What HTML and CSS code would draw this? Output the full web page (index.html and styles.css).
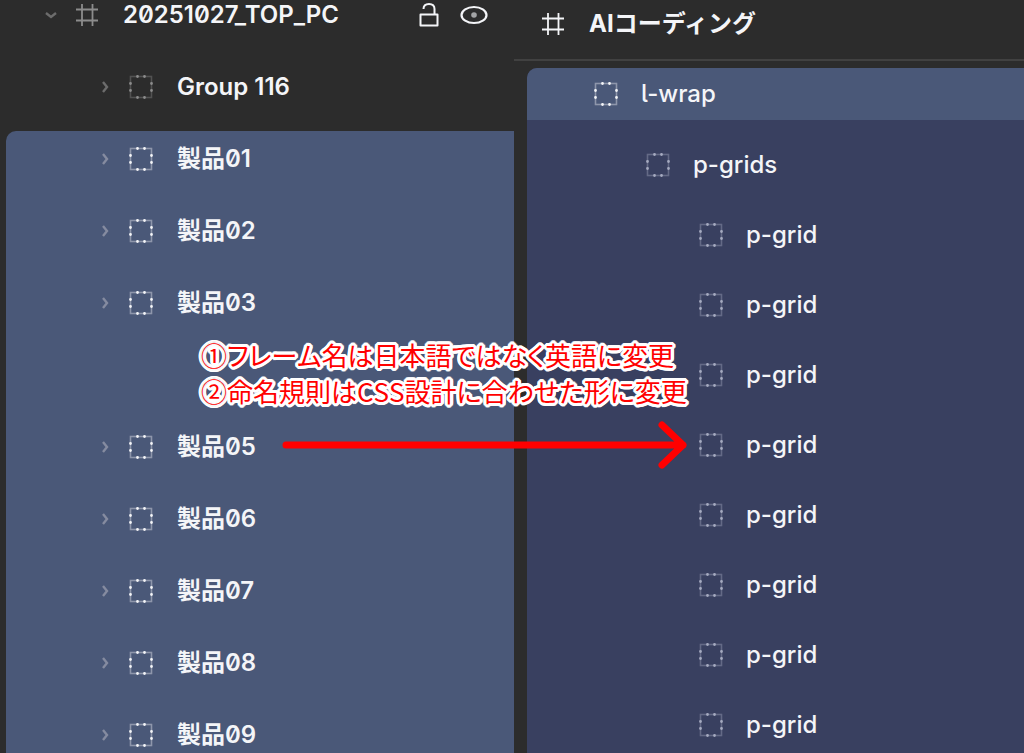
FILE: index.html
```html
<!DOCTYPE html>
<html lang="ja">
<head>
<meta charset="utf-8">
<meta name="viewport" content="width=device-width, initial-scale=1">
<title>20251027_TOP_PC</title>
<link rel="stylesheet" href="styles.css">
</head>
<body>
<svg class="symbols" aria-hidden="true">
  <symbol id="group" viewBox="0 0 24 24">
    <rect x="1.500" y="1.500" width="21" height="21" fill="none" stroke="currentColor" stroke-width="1.600" opacity=".4"/>
    <path d="M8.500 1.500h.01M15.500 1.500h.01M8.500 22.500h.01M15.500 22.500h.01M1.500 8.500v.01M1.500 15.500v.01M22.500 8.500v.01M22.500 15.500v.01" stroke="currentColor" stroke-width="2.800" stroke-linecap="round"/>
  </symbol>
  <symbol id="frame" viewBox="0 0 24 24">
    <path d="M7 1v22M17.500 1v22M1 6.500h22M1 17.500h22" fill="none" stroke="currentColor" stroke-width="1.800"/>
  </symbol>
  <symbol id="chevron" viewBox="0 0 12 16">
    <path d="M4 3l4 5-4 5" fill="none" stroke="currentColor" stroke-width="2.400"/>
  </symbol>
</svg>
<main class="board">
  <section class="pane pane-source">
    <header class="row row-top">
      <button class="toggle toggle-open" aria-label="折りたたむ"><svg><use href="#chevron"/></svg></button>
      <svg class="icon dim"><use href="#frame"/></svg>
      <span class="name">20251027_TOP_PC</span>
      <span class="tools">
        <button class="tool" aria-label="ロック"><svg viewBox="0 0 28 28"><path d="M5.500 13.500h17v11h-17zM8.500 8q0-5 5.500-5t5.500 5v5.500" fill="none" stroke="currentColor" stroke-width="2" stroke-linejoin="round"/></svg></button>
        <button class="tool" aria-label="表示"><svg viewBox="0 0 28 28"><ellipse cx="14" cy="14" rx="12.500" ry="8" fill="none" stroke="currentColor" stroke-width="2.200"/><circle cx="14" cy="14" r="2.800" fill="currentColor" opacity=".6"/></svg></button>
      </span>
    </header>
    <div class="row row-child">
      <button class="toggle" aria-label="開く"><svg><use href="#chevron"/></svg></button>
      <svg class="icon dim"><use href="#group"/></svg>
      <span class="name">Group 116</span>
    </div>
    <ul class="selection">
      <li class="row row-child"><button class="toggle" aria-label="開く"><svg><use href="#chevron"/></svg></button><svg class="icon"><use href="#group"/></svg><span class="name">製品01</span></li>
      <li class="row row-child"><button class="toggle" aria-label="開く"><svg><use href="#chevron"/></svg></button><svg class="icon"><use href="#group"/></svg><span class="name">製品02</span></li>
      <li class="row row-child"><button class="toggle" aria-label="開く"><svg><use href="#chevron"/></svg></button><svg class="icon"><use href="#group"/></svg><span class="name">製品03</span></li>
      <li class="row row-child row-after-gap"><button class="toggle" aria-label="開く"><svg><use href="#chevron"/></svg></button><svg class="icon"><use href="#group"/></svg><span class="name">製品05</span></li>
      <li class="row row-child"><button class="toggle" aria-label="開く"><svg><use href="#chevron"/></svg></button><svg class="icon"><use href="#group"/></svg><span class="name">製品06</span></li>
      <li class="row row-child"><button class="toggle" aria-label="開く"><svg><use href="#chevron"/></svg></button><svg class="icon"><use href="#group"/></svg><span class="name">製品07</span></li>
      <li class="row row-child"><button class="toggle" aria-label="開く"><svg><use href="#chevron"/></svg></button><svg class="icon"><use href="#group"/></svg><span class="name">製品08</span></li>
      <li class="row row-child"><button class="toggle" aria-label="開く"><svg><use href="#chevron"/></svg></button><svg class="icon"><use href="#group"/></svg><span class="name">製品09</span></li>
    </ul>
  </section>
  <section class="pane">
    <header class="head">
      <svg class="icon"><use href="#frame"/></svg>
      <span class="name heading">AIコーディング</span>
    </header>
    <div class="tree">
      <div class="node node-root"><svg class="icon"><use href="#group"/></svg><span class="name">l-wrap</span></div>
      <ul class="branch">
        <li class="node level-1"><svg class="icon soft"><use href="#group"/></svg><span class="name">p-grids</span></li>
        <li class="node level-2"><svg class="icon soft"><use href="#group"/></svg><span class="name">p-grid</span></li>
        <li class="node level-2"><svg class="icon soft"><use href="#group"/></svg><span class="name">p-grid</span></li>
        <li class="node level-2"><svg class="icon soft"><use href="#group"/></svg><span class="name">p-grid</span></li>
        <li class="node level-2"><svg class="icon soft"><use href="#group"/></svg><span class="name">p-grid</span></li>
        <li class="node level-2"><svg class="icon soft"><use href="#group"/></svg><span class="name">p-grid</span></li>
        <li class="node level-2"><svg class="icon soft"><use href="#group"/></svg><span class="name">p-grid</span></li>
        <li class="node level-2"><svg class="icon soft"><use href="#group"/></svg><span class="name">p-grid</span></li>
        <li class="node level-2"><svg class="icon soft"><use href="#group"/></svg><span class="name">p-grid</span></li>
      </ul>
    </div>
  </section>
  <p class="note">①フレーム名は日本語ではなく英語に変更<br>②命名規則はCSS設計に合わせた形に変更</p>
  <svg class="arrow" viewBox="0 0 410 50" aria-hidden="true"><path d="M6 25h397M382 5l21 20-21 20" fill="none" stroke="currentColor" stroke-width="7" stroke-linecap="round" stroke-linejoin="round"/></svg>
</main>
</body>
</html>
```
FILE: styles.css
```css
* { box-sizing: border-box; }

body {
  margin: 0;
  background: #2c2c2c;
  color: #f4f5f8;
  font-family: Inter, "Noto Sans CJK JP", sans-serif;
  font-size: 24px;
  font-weight: 500;
  line-height: 30px;
  font-feature-settings: "zero", "cv05";
}

ul { margin: 0; padding: 0; list-style: none; }

.symbols { position: absolute; width: 0; height: 0; }

.board {
  position: relative;
  display: grid;
  grid-template-columns: 257fr 255fr;
  height: 100vh;
  overflow: hidden;
}

.pane { display: flex; flex-direction: column; min-width: 0; }
.pane-source { font-weight: 600; }

.row { display: flex; align-items: center; height: 56px; }
.row-top { height: 30px; margin-bottom: 29px; padding: 0 26px 0 44px; }
.row-child { padding-left: 98px; }

.icon { width: 24px; height: 24px; flex: none; margin-right: 24px; }
.dim { color: #8c8c8c; }
.soft { color: #a6abc0; }
.name { white-space: nowrap; }

.toggle, .tool {
  display: flex;
  padding: 0;
  border: 0;
  background: none;
  color: inherit;
}
.toggle { margin-right: 17px; color: #858ba0; }
.toggle svg { width: 14px; height: 16px; }
.row-top .toggle, .pane > .row-child .toggle { color: #6c6c6c; }
.toggle-open svg { transform: rotate(90deg); }

.tools { display: flex; gap: 17px; margin-left: auto; }
.tool svg { width: 28px; height: 28px; }

.selection {
  flex: 1;
  display: flex;
  flex-direction: column;
  gap: 16px;
  margin: 16px 0 0 6px;
  border-radius: 10px 0 0 0;
  background: #4a5878;
}
.selection .row { flex: none; }
.selection .row-child { padding-left: 92px; }
.selection .row-after-gap { margin-top: 72px; }

.head {
  display: flex;
  align-items: center;
  height: 61px;
  padding: 0 0 11px 27px;
  border-bottom: 2px solid #414141;
}
.heading { font-weight: 700; }

.tree {
  flex: 1;
  margin: 7px 0 0 13px;
  overflow: hidden;
  border-radius: 10px 0 0 0;
  background: #394060;
}
.node { display: flex; align-items: center; height: 70px; }
.node .icon { margin-right: 23px; }
.node-root { height: 52px; padding-left: 67px; background: #4a5878; }
.branch { padding-top: 10px; }
.level-1 { padding-left: 119px; }
.level-2 { padding-left: 172px; }

.note {
  position: absolute;
  top: 337px;
  left: 201px;
  margin: 0;
  color: #f00;
  font-family: "Noto Sans CJK JP", sans-serif;
  font-size: 26px;
  font-weight: 400;
  line-height: 36px;
  font-kerning: none;
  font-feature-settings: "palt";
  white-space: nowrap;
  text-shadow:
    3px 0 #fff, -3px 0 #fff, 0 3px #fff, 0 -3px #fff,
    2px 2px #fff, -2px 2px #fff, 2px -2px #fff, -2px -2px #fff,
    3px 1px #fff, -3px 1px #fff, 3px -1px #fff, -3px -1px #fff,
    1px 3px #fff, -1px 3px #fff, 1px -3px #fff, -1px -3px #fff;
}

.arrow {
  position: absolute;
  top: 420px;
  left: 280px;
  width: 410px;
  height: 50px;
  color: #f00;
}
```
